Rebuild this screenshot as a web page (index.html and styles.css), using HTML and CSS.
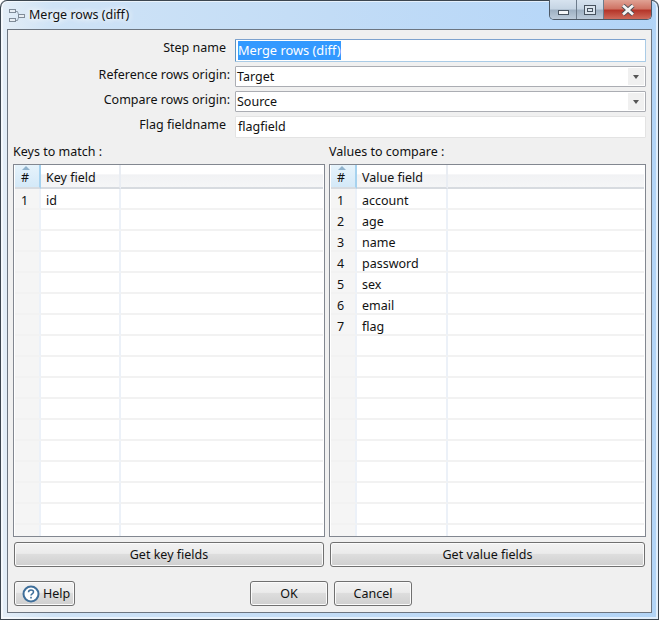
FILE: index.html
```html
<!DOCTYPE html>
<html lang="en">

<head>
    <meta charset="UTF-8">
    <title>Merge rows (diff)</title>
    <link rel="stylesheet" href="styles.css">
</head>

<body>
    <div class="window">
        <div class="titlebar">
            <svg class="title-icon" width="16" height="16" viewBox="0 0 16 16">
                <path d="M6 3.5h2.5l1.5 4.5M6 12.500h2.500l1.500-4.500" fill="none" stroke="#8d99a6"/>
                <rect x="0.500" y="1.500" width="6" height="3" fill="#e8eef4" stroke="#7f8b98"/>
                <rect x="0.500" y="10.500" width="6" height="3" fill="#e8eef4" stroke="#7f8b98"/>
                <rect x="9.500" y="6.500" width="6" height="3" fill="#e8eef4" stroke="#7f8b98"/>
            </svg>
            <span class="title-text">Merge rows (diff)</span>
            <div class="controls">
                <div class="ctl ctl-min"><span class="min-glyph"></span></div>
                <div class="ctl ctl-max"><span class="max-glyph"></span></div>
                <div class="ctl ctl-close">
                    <svg width="16" height="12" viewBox="0 0 16 12">
                        <path d="M3 1.500l10 9M13 1.500l-10 9" stroke="#4a4f57" stroke-width="4.500"/>
                        <path d="M3 1.500l10 9M13 1.500l-10 9" stroke="#f4f4f4" stroke-width="2.800"/>
                    </svg>
                </div>
            </div>
        </div>
        <div class="client">
            <div class="form">
                <label class="lbl lbl-inset">Step name</label>
                <div class="field field-focus"><span class="selected">Merge rows (diff)</span></div>
                <label class="lbl">Reference rows origin:</label>
                <div class="field field-combo">Target<span class="arrow"></span></div>
                <label class="lbl">Compare rows origin:</label>
                <div class="field field-combo">Source<span class="arrow"></span></div>
                <label class="lbl lbl-inset">Flag fieldname</label>
                <div class="field field-plain">flagfield</div>
            </div>
            <div class="panels">
                <div class="panel panel-left">
                    <div class="panel-title">Keys to match :</div>
                    <div class="grid-box">
                        <table>
                            <thead>
                                <tr><th class="c-num"><span class="sort"></span>#</th><th class="c-key">Key field</th><th></th></tr>
                            </thead>
                            <tbody>
                                <tr><td class="c-num">1</td><td>id</td><td></td></tr>
                                <tr><td class="c-num"></td><td></td><td></td></tr>
                                <tr><td class="c-num"></td><td></td><td></td></tr>
                                <tr><td class="c-num"></td><td></td><td></td></tr>
                                <tr><td class="c-num"></td><td></td><td></td></tr>
                                <tr><td class="c-num"></td><td></td><td></td></tr>
                                <tr><td class="c-num"></td><td></td><td></td></tr>
                                <tr><td class="c-num"></td><td></td><td></td></tr>
                                <tr><td class="c-num"></td><td></td><td></td></tr>
                                <tr><td class="c-num"></td><td></td><td></td></tr>
                                <tr><td class="c-num"></td><td></td><td></td></tr>
                                <tr><td class="c-num"></td><td></td><td></td></tr>
                                <tr><td class="c-num"></td><td></td><td></td></tr>
                                <tr><td class="c-num"></td><td></td><td></td></tr>
                                <tr><td class="c-num"></td><td></td><td></td></tr>
                                <tr><td class="c-num"></td><td></td><td></td></tr>
                                <tr><td class="c-num"></td><td></td><td></td></tr>
                            </tbody>
                        </table>
                    </div>
                    <button class="btn btn-wide">Get key fields</button>
                </div>
                <div class="panel panel-right">
                    <div class="panel-title">Values to compare :</div>
                    <div class="grid-box">
                        <table>
                            <thead>
                                <tr><th class="c-num"><span class="sort"></span>#</th><th class="c-value">Value field</th><th></th></tr>
                            </thead>
                            <tbody>
                                <tr><td class="c-num">1</td><td>account</td><td></td></tr>
                                <tr><td class="c-num">2</td><td>age</td><td></td></tr>
                                <tr><td class="c-num">3</td><td>name</td><td></td></tr>
                                <tr><td class="c-num">4</td><td>password</td><td></td></tr>
                                <tr><td class="c-num">5</td><td>sex</td><td></td></tr>
                                <tr><td class="c-num">6</td><td>email</td><td></td></tr>
                                <tr><td class="c-num">7</td><td>flag</td><td></td></tr>
                                <tr><td class="c-num"></td><td></td><td></td></tr>
                                <tr><td class="c-num"></td><td></td><td></td></tr>
                                <tr><td class="c-num"></td><td></td><td></td></tr>
                                <tr><td class="c-num"></td><td></td><td></td></tr>
                                <tr><td class="c-num"></td><td></td><td></td></tr>
                                <tr><td class="c-num"></td><td></td><td></td></tr>
                                <tr><td class="c-num"></td><td></td><td></td></tr>
                                <tr><td class="c-num"></td><td></td><td></td></tr>
                                <tr><td class="c-num"></td><td></td><td></td></tr>
                                <tr><td class="c-num"></td><td></td><td></td></tr>
                            </tbody>
                        </table>
                    </div>
                    <button class="btn btn-wide">Get value fields</button>
                </div>
            </div>
            <div class="footer">
                <button class="btn btn-help">
                    <svg width="18" height="18" viewBox="0 0 18 18">
                        <circle cx="9" cy="9" r="7.500" fill="#fff" stroke="#3f6f9a" stroke-width="2"/>
                        <path d="M6.500 7.200c0-1.500 1.100-2.300 2.500-2.300s2.500.8 2.500 2.100c0 1.900-2.500 1.900-2.500 3.600" fill="none" stroke="#3f6f9a" stroke-width="1.500"/>
                        <rect x="8.200" y="11.800" width="1.600" height="1.700" fill="#3f6f9a"/>
                    </svg>
                    Help
                </button>
                <div class="footer-center">
                    <button class="btn btn-foot">OK</button>
                    <button class="btn btn-foot">Cancel</button>
                </div>
            </div>
        </div>
    </div>
</body>

</html>
```
FILE: styles.css
```css
* {
    margin: 0;
    padding: 0;
    box-sizing: border-box;
}

html,
body {
    width: 659px;
    height: 620px;
    overflow: hidden;
    background: #fff;
}

body {
    font-family: "Noto Sans", "Open Sans", sans-serif;
    font-size: 12.5px;
    color: #111;
}

.window {
    width: 659px;
    height: 620px;
    display: flex;
    flex-direction: column;
    padding: 0 6px 6px 6px;
    border: 1px solid #3c4650;
    border-width: 0 1px 1px 1px;
    border-radius: 7px 7px 0 0;
    background: linear-gradient(90deg, #e4eef7 0, #cfe3f6 8%, #c2dcf6 50%, #b7d7f8 85%, #b2d4f6 100%);
    box-shadow: inset 0 1px 0 #3c4650, inset 0 0 0 2px rgba(255, 255, 255, .6);
}

.titlebar {
    height: 29px;
    display: flex;
    align-items: flex-start;
    flex-shrink: 0;
    margin-left: -6px;
    margin-right: -6px;
    padding-left: 8px;
}

.title-icon {
    margin-top: 8px;
}

.title-text {
    margin: 6px 0 0 4px;
    font-size: 12.5px;
    color: #111;
    text-shadow: 0 0 6px #fff, 0 0 6px #fff;
}

.controls {
    display: flex;
    margin-left: auto;
    margin-right: 6px;
    height: 20px;
    border: 1px solid #4d5966;
    border-top: 0;
    border-radius: 0 0 5px 5px;
    overflow: hidden;
}

.ctl {
    display: flex;
    align-items: center;
    justify-content: center;
    height: 100%;
}

.ctl-min,
.ctl-max {
    width: 27px;
    border-right: 1px solid #6d7c8c;
    background: linear-gradient(#d7e3ef 0, #c6d5e4 45%, #9fb1c3 55%, #bccbda 100%);
}

.ctl-close {
    width: 47px;
    background: linear-gradient(#e0a294 0, #cf7465 45%, #b5362a 55%, #cf6a5a 100%);
}

.min-glyph {
    width: 11px;
    height: 5px;
    margin-top: 5px;
    background: #f4f6f8;
    border: 1px solid #47525e;
}

.max-glyph {
    width: 12px;
    height: 10px;
    border: 1px solid #47525e;
    background: #dbe5ee;
    box-shadow: inset 0 0 0 2px #dbe5ee, inset 0 0 0 3px #47525e;
}

.client {
    flex: 1;
    min-height: 0;
    display: flex;
    flex-direction: column;
    background: #f0f0f0;
    border: 1px solid #6c7580;
    padding: 9px 5px 6px 5px;
}

.form {
    display: grid;
    grid-template-columns: 217px 1fr;
    grid-template-rows: 23px 21px 21px 22px;
    column-gap: 5px;
    row-gap: 4px;
}

.lbl {
    text-align: right;
    line-height: 18px;
}

.lbl-inset {
    padding-right: 4px;
}

.field {
    position: relative;
    background: #fff;
    border: 1px solid #abadb3;
    border-radius: 1px;
    padding-left: 1px;
    line-height: 19px;
    white-space: nowrap;
}

.field-focus {
    border-color: #7da2ce #a9cbe6 #a9cbe6 #5d93c2;
    padding-left: 2px;
    padding-top: 1px;
}

.field-plain {
    border-color: #e3e3e3;
    padding-left: 2px;
    line-height: 20px;
}

.selected {
    display: inline-block;
    background: #3399ff;
    color: #fff;
    height: 19px;
    line-height: 18px;
    font-size: 12.8px;
}

.arrow {
    position: absolute;
    top: 1px;
    right: 1px;
    bottom: 1px;
    width: 16px;
    background: #f0f0f0;
}

.arrow::after {
    content: "";
    position: absolute;
    left: 5px;
    top: 7px;
    border-left: 3.500px solid transparent;
    border-right: 3.500px solid transparent;
    border-top: 4px solid #555;
}

.panels {
    flex: 1;
    min-height: 0;
    display: flex;
    gap: 4px;
}

.panel {
    display: flex;
    flex-direction: column;
    min-width: 0;
}

.panel-left {
    width: 312px;
}

.panel-right {
    flex: 1;
}

.panel-title {
    height: 26px;
    padding-top: 5px;
    line-height: 18px;
}

.grid-box {
    height: 374px;
    overflow: hidden;
    background: #fff;
    border: 1px solid #828790;
    padding: 0 1px;
}

table {
    border-collapse: separate;
    border-spacing: 0;
    table-layout: fixed;
    width: 100%;
}

th {
    height: 24px;
    font-weight: normal;
    text-align: left;
    padding: 4px 0 0 5px;
    background: linear-gradient(#fff 0, #fff 40%, #f1f2f4 45%, #f5f6f7 100%);
    border-right: 2px solid #e9edf3;
    border-bottom: 2px solid #d7dbe0;
    line-height: 16px;
}

th:last-child,
td:last-child {
    border-right: 0;
}

th.c-num {
    position: relative;
    width: 26px;
    padding: 4px 4px 0 0;
    text-align: center;
    background: linear-gradient(#e6f3fb, #d4e9f8);
    border-right: 2px solid #a6d2ef;
}

th.c-key {
    width: 80px;
}

th.c-value {
    width: 91px;
}

.sort {
    position: absolute;
    top: 1px;
    left: 7px;
    border-left: 4px solid transparent;
    border-right: 4px solid transparent;
    border-bottom: 4px solid #8fb2cc;
}

td {
    height: 21px;
    padding: 4px 0 0 5px;
    line-height: 15px;
    vertical-align: top;
    border-right: 2px solid #ecf1f8;
    border-bottom: 2px solid #f2f2f2;
    white-space: nowrap;
}

td.c-num {
    background: #f5f5f5;
    padding-left: 6px;
}

.btn {
    font-family: inherit;
    font-size: 12.5px;
    color: #111;
    border: 1px solid #707070;
    border-radius: 3px;
    background: linear-gradient(#f2f2f2 0, #ebebeb 45%, #dddddd 50%, #cfcfcf 100%);
    box-shadow: inset 0 0 0 1px #fbfbfb;
}

.btn-wide {
    height: 25px;
    margin: 5px 1px 0;
}

.footer {
    display: flex;
    align-items: center;
    margin-top: 14px;
    padding-left: 1px;
}

.btn-help {
    width: 61px;
    height: 25px;
    display: flex;
    align-items: center;
    gap: 3px;
    padding-left: 7px;
}

.footer-center {
    display: flex;
    gap: 6px;
    margin-left: 175px;
}

.btn-foot {
    width: 78px;
    height: 25px;
}
```
